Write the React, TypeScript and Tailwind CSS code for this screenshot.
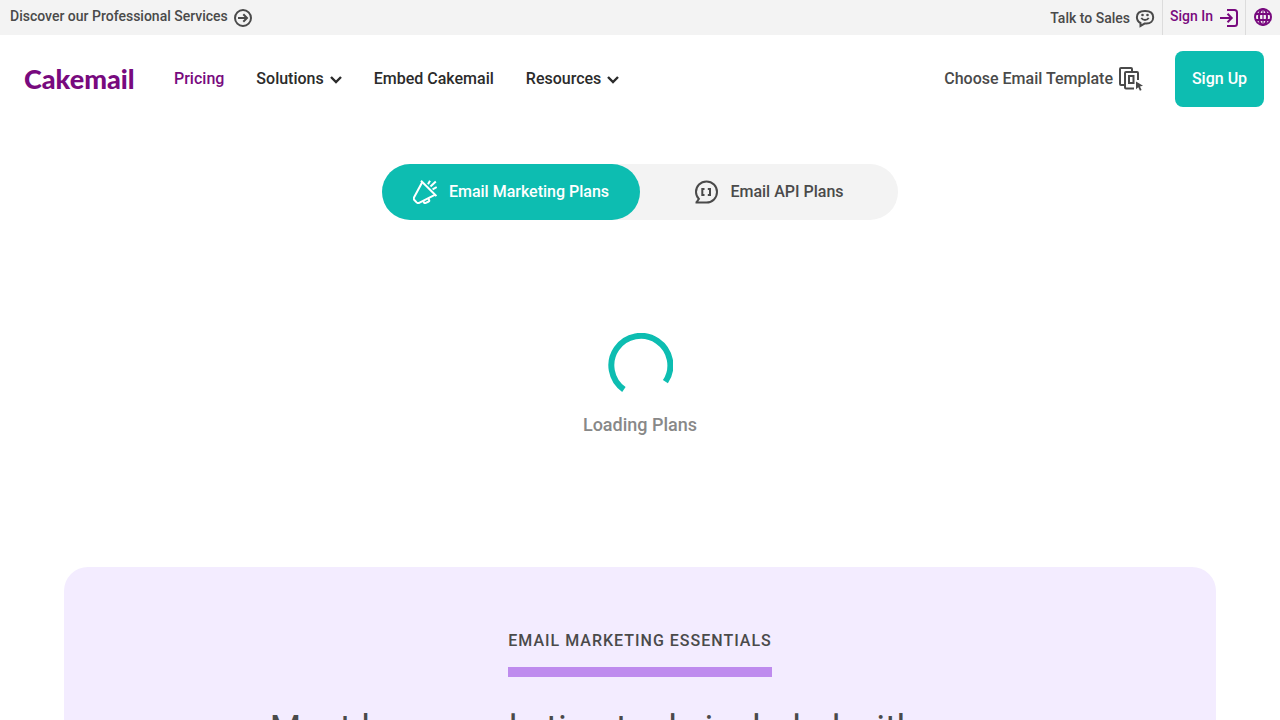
import React, { useState } from "react";

const ArrowCircleIcon = () => (
  <svg className="size-5" viewBox="0 0 20 20" fill="none" stroke="currentColor" strokeWidth="2" aria-hidden="true">
    <circle cx="10" cy="10" r="8" />
    <path d="M5 10h8.500M10.300 6.300 14 10l-3.700 3.700" />
  </svg>
);

const SmileBubbleIcon = () => (
  <svg className="size-5" viewBox="0 0 20 20" fill="none" stroke="currentColor" strokeWidth="2" aria-hidden="true">
    <path d="M5.500 15v3l4-2.400h2c4 0 6.700-2.600 6.700-6.300S15.400 3 10 3 1.900 5.600 1.900 9.300c0 2.600 1.400 4.600 3.600 5.700z" />
    <path d="M6.300 9.800c.8 1.500 2 2.200 3.700 2.200s2.900-.7 3.700-2.200" strokeWidth="1.800" />
    <circle cx="7.500" cy="7" r="1.300" fill="currentColor" stroke="none" />
    <circle cx="12.500" cy="7" r="1.300" fill="currentColor" stroke="none" />
  </svg>
);

const SignInIcon = () => (
  <svg className="size-5" viewBox="0 0 20 20" fill="none" stroke="currentColor" strokeWidth="2" aria-hidden="true">
    <path d="M8 2h7.500a2.500 2.500 0 0 1 2.500 2.500v11a2.500 2.500 0 0 1-2.500 2.500H8" />
    <path d="M1 10h11.500M8.500 5.800l4.200 4.200-4.200 4.200" />
  </svg>
);

const GlobeIcon = () => (
  <svg className="size-5" viewBox="0 0 20 20" fill="none" stroke="currentColor" strokeWidth="2" aria-hidden="true">
    <circle cx="10" cy="10" r="8" />
    <ellipse cx="10" cy="10" rx="4" ry="8" />
    <path d="M2.500 7h15M2.500 13h15" strokeWidth="1.800" />
    <path d="M10 2v16" strokeWidth="1.200" />
  </svg>
);

const ChevronIcon = () => (
  <svg className="size-3" viewBox="0 0 12 12" fill="none" stroke="currentColor" strokeWidth="2.400" aria-hidden="true">
    <path d="m1 4 5 5 5-5" />
  </svg>
);

const TemplateIcon = () => (
  <svg className="size-6" viewBox="0 0 24 24" fill="none" stroke="currentColor" strokeWidth="2" aria-hidden="true">
    <path d="M5 18H2a1 1 0 0 1-1-1V2a1 1 0 0 1 1-1h10a1 1 0 0 1 1 1v2" />
    <path d="M15 21.500H7a1 1 0 0 1-1-1V6a1 1 0 0 1 1-1h11a1 1 0 0 1 1 1v7" />
    <path d="M10 9h4.500v7H10z" />
    <path d="m17 14.500 7 4.300-3 .7 1.600 3.500-1.700.8-1.600-3.600-2.300 2z" fill="currentColor" stroke="none" />
  </svg>
);

const MegaphoneIcon = () => (
  <svg className="size-6" viewBox="0 0 24 24" fill="none" stroke="currentColor" strokeWidth="2" strokeLinejoin="round" aria-hidden="true">
    <path d="M8 .8 23.400 16" />
    <path d="M9.200 2.200 1.100 17.300c-.5 1-.4 1.900.3 2.700l2.200 2.400c.7.700 1.600.9 2.500.4l16.200-8.100" />
    <path d="m10.200 21.200 1 1.600c.3.400.7.500 1.100.3l3.400-1.600c.5-.3.700-.7.500-1.200l-.8-2" />
    <path d="m15 4.300 2-3.500M17.500 6.600l5.300-5M19.600 9.300l4.100-2.300" />
  </svg>
);

const ApiBubbleIcon = () => (
  <svg className="size-6" viewBox="0 0 24 24" fill="none" stroke="currentColor" strokeWidth="2" aria-hidden="true">
    <path d="M1.500 22.500H12.500c6 0 10.500-4.700 10.500-10.500S18.500 1.500 12.500 1.500 2 6.200 2 12c0 2.600 1 5 2.900 6.900L2.400 22.500" />
    <path d="M10.500 9H8.300v6h2.200M13.800 9H16v6h-2.200" />
  </svg>
);

const Spinner = () => (
  <svg className="size-[66px]" viewBox="0 0 66 66" fill="none" stroke="#0dbdb1" strokeWidth="6" aria-hidden="true">
    <path d="M16.900 56.500A29.500 29.500 0 1 1 58.400 48.700" />
  </svg>
);

const navItems = [
  { label: "Pricing", active: true, menu: false },
  { label: "Solutions", active: false, menu: true },
  { label: "Embed Cakemail", active: false, menu: false },
  { label: "Resources", active: false, menu: true },
];

const TopBar = () => (
  <div className="flex h-[35px] items-center justify-between bg-[#f3f3f3] text-sm font-medium text-[#4a4a4a]">
    <a href="#services" className="flex items-center gap-[5px] pl-2.5">
      <span className="pb-1">Discover our Professional Services</span>
      <ArrowCircleIcon />
    </a>
    <div className="flex h-full items-center">
      <a href="#sales" className="flex items-center gap-[5px] pr-[7px]">
        Talk to Sales
        <SmileBubbleIcon />
      </a>
      <a href="#signin" className="flex h-full items-center gap-1.5 border-l border-[#dcdcdc] pr-1.5 pl-[7px] text-[#780a7e]">
        <span className="pb-1">Sign In</span>
        <SignInIcon />
      </a>
      <button type="button" aria-label="Language" className="flex h-full items-center border-l border-[#dcdcdc] px-[7px] pb-0.5 text-[#780a7e]">
        <GlobeIcon />
      </button>
    </div>
  </div>
);

const Header = () => (
  <header className="flex items-center justify-between px-4 py-4 font-medium">
    <div className="flex items-center">
      <a
        href="#home"
        className="w-[142px] pl-2 font-[Lato,sans-serif] text-[27px] leading-8 font-black text-[#780a7e]"
      >
        Cakemail
      </a>
      <nav className="flex items-center gap-8 pl-4">
        {navItems.map((item) =>
          item.menu ? (
            <button key={item.label} type="button" className="flex items-center gap-1.5 text-[#2b2b2b]">
              {item.label}
              <ChevronIcon />
            </button>
          ) : (
            <a
              key={item.label}
              href="#nav"
              className={item.active ? "text-[#780a7e]" : "text-[#2b2b2b]"}
            >
              {item.label}
            </a>
          )
        )}
      </nav>
    </div>
    <div className="flex items-center gap-8">
      <a href="#templates" className="flex items-center gap-1.5 text-[#4a4a4a]">
        Choose Email Template
        <TemplateIcon />
      </a>
      <button type="button" className="h-14 min-w-[89px] rounded-lg bg-[#0dbdb1] px-4 text-white">
        Sign Up
      </button>
    </div>
  </header>
);

const App = () => {
  const [plan, setPlan] = useState("marketing");
  const tabClass = "flex h-14 flex-1 items-center justify-center gap-3 rounded-full";

  return (
    <div className="bg-white font-[Roboto,sans-serif] text-base text-[#4a4a4a]">
      <TopBar />
      <Header />
      <main className="px-16 pt-[41px]">
        <div className="mx-auto flex max-w-[516px] rounded-full bg-[#f3f3f3] font-medium">
          <button
            type="button"
            onClick={() => setPlan("marketing")}
            className={`${tabClass} ${plan === "marketing" ? "bg-[#0dbdb1] text-white" : ""}`}
          >
            <MegaphoneIcon />
            Email Marketing Plans
          </button>
          <button
            type="button"
            onClick={() => setPlan("api")}
            className={`${tabClass} ${plan === "api" ? "bg-[#0dbdb1] text-white" : ""}`}
          >
            <ApiBubbleIcon />
            Email API Plans
          </button>
        </div>
        <div role="status" className="flex flex-col items-center gap-3 pt-[113px] pb-32">
          <Spinner />
          <p className="text-lg leading-7 font-medium text-[#888888]">Loading Plans</p>
        </div>
        <section className="flex flex-col items-center rounded-3xl bg-[#f3ecff] px-8 pt-[62px] pb-16 text-center">
          <p className="border-b-10 border-[#be8bee] pb-3.5 font-medium tracking-[1px] uppercase">
            Email Marketing Essentials
          </p>
          <h1 className="pt-7 text-4xl leading-12">
            Must-have marketing tools included with every
          </h1>
        </section>
      </main>
    </div>
  );
};

export default App;
